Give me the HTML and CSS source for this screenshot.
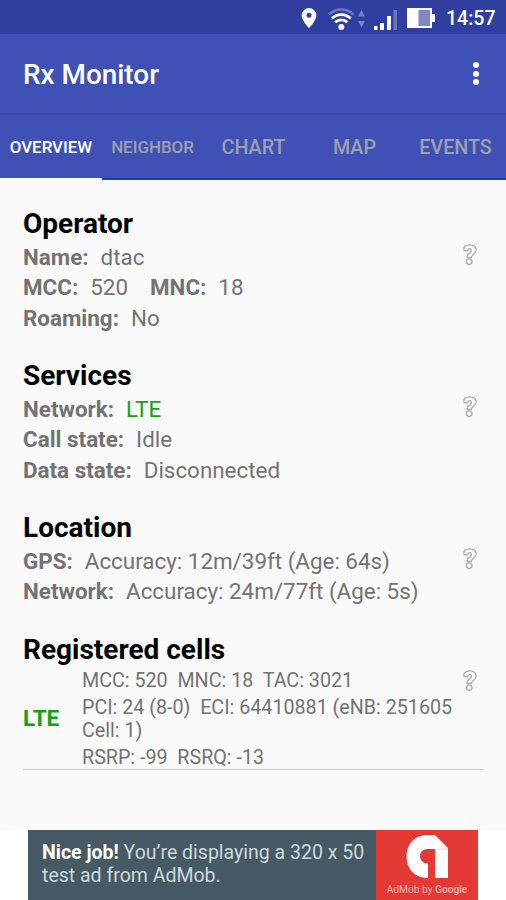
FILE: index.html
```html
<!DOCTYPE html>
<html lang="en">
<head>
    <meta charset="UTF-8">
    <meta name="viewport" content="width=device-width, initial-scale=1.0">
    <title>Rx Monitor</title>
    <link rel="stylesheet" href="styles.css">
</head>
<body>

    <svg width="0" height="0" class="symbols">
        <symbol id="help" viewBox="0 0 16 24">
            <path d="M2 7.500V4.500C3.500 2.500 5.500 1.800 8 1.800c3.700 0 6.200 2 6.200 5.200 0 4-4.700 4.500-4.700 7.300H5c0-4.500 4.300-4.500 4.300-7 0-1.200-.7-1.600-1.800-1.600-1.500 0-1.700.8-2.500 2.300z"/>
            <circle cx="7.200" cy="18.600" r="2.800"/>
        </symbol>
    </svg>

    <div class="status-bar">
        <svg class="pin" width="16" height="22" viewBox="0 0 16 22">
            <path fill="#fff" fill-rule="evenodd" d="M8 1a7.400 7.400 0 0 0-7.400 7.400C.6 13.500 8 21 8 21s7.400-7.500 7.400-12.600A7.400 7.400 0 0 0 8 1zm0 4.800a2.500 2.500 0 1 1 0 5 2.500 2.500 0 0 1 0-5z"/>
        </svg>
        <svg class="wifi" width="38" height="24" viewBox="0 0 38 24">
            <g fill="none" stroke="#fff" stroke-width="2.700">
                <path stroke="#6c78c4" d="M1 7.500a17.500 17.500 0 0 1 24.500 0"/>
                <path d="M3.800 11.500a13.500 13.500 0 0 1 19 0"/>
                <path d="M7.200 15.300a8.800 8.800 0 0 1 12.200 0"/>
            </g>
            <circle cx="13.300" cy="20" r="3" fill="#fff"/>
            <path fill="#7480c6" d="M33.500 3l3.500 6.500h-7zM33.500 20.500L37 14h-7z"/>
        </svg>
        <svg class="signal" width="25" height="24" viewBox="0 0 25 24">
            <path fill="#fff" d="M1 19h3.500v4H1zM7 16h4v7H7zM14 9h4v14h-4z"/>
            <path fill="#6975bf" d="M20.500 3H24v20h-3.500z"/>
        </svg>
        <svg class="battery" width="28" height="20" viewBox="0 0 28 20">
            <path fill="#fff" d="M0 0h25v6h3v8h-3v6H0z"/>
            <path fill="#7e88c2" d="M11.500 2H23v16H11.500z"/>
        </svg>
        <span class="clock">14:57</span>
    </div>

    <header>
        <h1>Rx Monitor</h1>
        <div class="menu"><i></i><i></i><i></i></div>
    </header>

    <nav class="tabs">
        <a class="tab small active">OVERVIEW</a>
        <a class="tab small">NEIGHBOR</a>
        <a class="tab">CHART</a>
        <a class="tab">MAP</a>
        <a class="tab">EVENTS</a>
    </nav>

    <main>
        <section>
            <div class="info">
                <h2>Operator</h2>
                <p><b>Name:</b><span>dtac</span></p>
                <p><b>MCC:</b><span>520</span><b class="second">MNC:</b><span>18</span></p>
                <p><b>Roaming:</b><span>No</span></p>
            </div>
            <svg class="help"><use href="#help"/></svg>
        </section>

        <section>
            <div class="info">
                <h2>Services</h2>
                <p><b>Network:</b><span class="green">LTE</span></p>
                <p><b>Call state:</b><span>Idle</span></p>
                <p><b>Data state:</b><span>Disconnected</span></p>
            </div>
            <svg class="help"><use href="#help"/></svg>
        </section>

        <section>
            <div class="info">
                <h2>Location</h2>
                <p><b>GPS:</b><span>Accuracy: 12m/39ft (Age: 64s)</span></p>
                <p><b>Network:</b><span>Accuracy: 24m/77ft (Age: 5s)</span></p>
            </div>
            <svg class="help"><use href="#help"/></svg>
        </section>

        <section class="cells">
            <div class="info">
                <h2>Registered cells</h2>
                <div class="cell">
                    <b class="green">LTE</b>
                    <div class="cell-text">
                        <p>MCC: 520&nbsp; MNC: 18&nbsp; TAC: 3021</p>
                        <p>PCI: 24 (8-0)&nbsp; ECI: 64410881 (eNB: 251605<br>Cell: 1)</p>
                        <p>RSRP: -99&nbsp; RSRQ: -13</p>
                    </div>
                </div>
            </div>
            <svg class="help"><use href="#help"/></svg>
        </section>
    </main>

    <footer>
        <div class="ad">
            <p class="ad-text"><b>Nice job!</b> You’re displaying a 320 x 50<br>test ad from AdMob.</p>
            <div class="admob">
                <svg width="44" height="44" viewBox="0 0 44 44">
                    <path fill="#fff" d="M23 44C9 44 1.500 34 1.500 22.500 1.500 10 10 1 22 1h8l13 13v30H30V15h-7c-5 0-8 3-8 7s3 7.500 8 7.500z"/>
                    <path fill="#e4e4e4" d="M30 15l13-1v2H30z"/>
                </svg>
                <span>AdMob by <b>Google</b></span>
            </div>
        </div>
    </footer>

</body>
</html>
```

FILE: styles.css
```css
body {
    display: flex;
    flex-direction: column;
    height: 900px;
    margin: 0;
    overflow: hidden;
    font-family: Roboto, sans-serif;
    background-color: #fafafa;
    color: #737373;
}

h1, h2, p {
    margin: 0;
}

.symbols {
    position: absolute;
}

.status-bar {
    display: flex;
    align-items: center;
    justify-content: flex-end;
    height: 34px;
    padding-right: 10px;
    padding-top: 3px;
    box-sizing: border-box;
    background-color: #303f9f;
    color: #fff;
}

.pin {
    margin-bottom: 1px;
}

.wifi {
    margin-left: 11px;
}

.signal {
    margin-left: 7px;
}

.battery {
    margin-left: 9px;
    margin-bottom: 1px;
}

.clock {
    width: 50px;
    margin-left: 11px;
    font-size: 19.500px;
    font-weight: 500;
    line-height: 24px;
    white-space: nowrap;
}

header {
    display: flex;
    align-items: center;
    justify-content: space-between;
    height: 81px;
    padding: 2px 27px 0 23px;
    box-sizing: border-box;
    background-color: #3f51b5;
    border-bottom: 2px solid #3948a0;
    color: #fff;
}

h1 {
    font-size: 27.900px;
    font-weight: 500;
}

.menu {
    display: flex;
    flex-direction: column;
    gap: 2.500px;
    margin-bottom: 2px;
}

.menu i {
    width: 6px;
    height: 6px;
    border-radius: 50%;
    background-color: #fff;
}

.tabs {
    display: grid;
    grid-template-columns: 102px repeat(4, 1fr);
    height: 65px;
    box-sizing: border-box;
    background-color: #3f51b5;
}

.tab {
    display: flex;
    align-items: center;
    justify-content: center;
    padding-top: 2px;
    font-size: 19.700px;
    font-weight: 500;
    color: #9f9fae;
    border-bottom: 2px solid #2440a8;
}

.tab.small {
    padding-top: 0;
    font-size: 16.900px;
}

.tab.active {
    color: #fff;
    border-bottom-color: #fff;
}

main {
    flex: 1;
    padding: 24px 22px 0 23px;
}

section {
    display: flex;
    justify-content: space-between;
    margin-bottom: 22.800px;
}

h2 {
    font-size: 28px;
    font-weight: 700;
    line-height: 40px;
    height: 38px;
    color: #000;
}

.info p {
    font-size: 22.400px;
    line-height: 30.400px;
    white-space: nowrap;
}

.info span {
    margin-left: 12px;
}

.info .second {
    margin-left: 22px;
}

.green {
    color: #13a313;
}

.help {
    width: 16px;
    height: 24px;
    margin-top: 39px;
    margin-right: 6px;
    fill: #fff;
    stroke: #a9a9a9;
    stroke-width: 1.300px;
}

.cells {
    position: relative;
}

.cells .info {
    flex: 1;
}

.cells .help {
    position: absolute;
    right: 0;
}

.cell {
    display: flex;
    align-items: center;
    padding-top: 1px;
    border-bottom: 1px solid #cfcfcf;
}

.cell > b {
    width: 59px;
    padding-bottom: 2px;
    font-size: 22.500px;
}

.cell-text {
    display: grid;
    gap: 4px;
}

.info .cell-text p {
    font-size: 19.700px;
    line-height: 23px;
}

footer {
    display: flex;
    justify-content: center;
    height: 70px;
    background-color: #fff;
}

.ad {
    display: flex;
    width: 450px;
    background-color: #455a64;
}

.ad-text {
    flex: 1;
    padding: 11px 0 0 14px;
    font-size: 19.500px;
    line-height: 23px;
    color: #cfd8dc;
    white-space: nowrap;
}

.ad-text b {
    color: #fff;
}

.admob {
    display: flex;
    flex-direction: column;
    align-items: center;
    width: 102px;
    padding-top: 4px;
    box-sizing: border-box;
    background-color: #e53935;
}

.admob span {
    margin-top: 4px;
    font-size: 10.200px;
    line-height: 16px;
    color: #f6b5b3;
    white-space: nowrap;
}

.admob span b {
    font-weight: 500;
}
```
